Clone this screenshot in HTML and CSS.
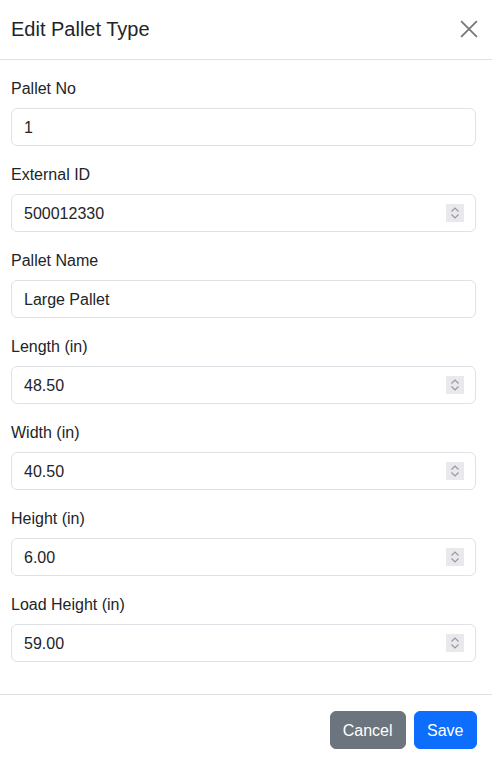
FILE: index.html
```html
<!DOCTYPE html>
<html lang="en">
<head>
    <meta charset="UTF-8">
    <meta name="viewport" content="width=device-width, initial-scale=1.0">
    <title>Edit Pallet Type</title>
    <link rel="stylesheet" href="styles.css">
</head>
<body>
    <div class="modal">
        <div class="modal-header">
            <h5 class="modal-title">Edit Pallet Type</h5>
            <button class="btn-close" aria-label="Close">
                <svg width="18" height="18" viewBox="0 0 16 16">
                    <path d="M1 1L15 15M15 1L1 15" stroke="#777" stroke-width="1.6" fill="none"/>
                </svg>
            </button>
        </div>
        <form class="modal-body">
            <div class="field">
                <label class="form-label">Pallet No</label>
                <div class="form-control">
                    <input type="text" value="1">
                </div>
            </div>
            <div class="field">
                <label class="form-label">External ID</label>
                <div class="form-control">
                    <input type="number" value="500012330">
                    <span class="spinner"></span>
                </div>
            </div>
            <div class="field">
                <label class="form-label">Pallet Name</label>
                <div class="form-control">
                    <input type="text" value="Large Pallet">
                </div>
            </div>
            <div class="field">
                <label class="form-label">Length (in)</label>
                <div class="form-control">
                    <input type="number" step="0.01" value="48.50">
                    <span class="spinner"></span>
                </div>
            </div>
            <div class="field">
                <label class="form-label">Width (in)</label>
                <div class="form-control">
                    <input type="number" step="0.01" value="40.50">
                    <span class="spinner"></span>
                </div>
            </div>
            <div class="field">
                <label class="form-label">Height (in)</label>
                <div class="form-control">
                    <input type="number" step="0.01" value="6.00">
                    <span class="spinner"></span>
                </div>
            </div>
            <div class="field">
                <label class="form-label">Load Height (in)</label>
                <div class="form-control">
                    <input type="number" step="0.01" value="59.00">
                    <span class="spinner"></span>
                </div>
            </div>
        </form>
        <div class="modal-footer">
            <button class="btn btn-secondary">Cancel</button>
            <button class="btn btn-primary">Save</button>
        </div>
    </div>
</body>
</html>
```

FILE: styles.css
```css
* {
    box-sizing: border-box;
}

body {
    font-family: 'Liberation Sans', Arial, sans-serif;
    font-size: 16px;
    line-height: 1.5;
    color: #212529;
    margin: 0;
    background-color: #fff;
}

.modal {
    width: 492px;
    background-color: #fff;
}

.modal-header {
    display: flex;
    align-items: center;
    justify-content: space-between;
    padding: 15px 14px 16px 11px;
    border-bottom: 1px solid #dee2e6;
}

.modal-title {
    margin: 0;
    font-size: 20px;
    font-weight: 500;
    line-height: 28px;
}

.btn-close {
    border: none;
    background: transparent;
    padding: 0;
    width: 18px;
    height: 18px;
    display: flex;
    cursor: pointer;
}

.modal-body {
    padding: 16px 16px 16px 11px;
    margin: 0;
}

.field {
    margin-bottom: 16px;
}

.form-label {
    display: block;
    margin-bottom: 8px;
    padding-top: 1px;
    height: 24px;
}

.form-control {
    display: flex;
    align-items: center;
    height: 38px;
    padding: 0 11px 0 12px;
    background-color: #fff;
    border: 1px solid #dee2e6;
    border-radius: 6px;
}

.form-control input {
    flex: 1;
    min-width: 0;
    border: none;
    padding: 2px 0 0;
    margin: 0;
    outline: none;
    font-family: inherit;
    font-size: 16px;
    line-height: 24px;
    color: #212529;
    background: transparent;
    -moz-appearance: textfield;
}

.form-control input::-webkit-inner-spin-button,
.form-control input::-webkit-outer-spin-button {
    -webkit-appearance: none;
    margin: 0;
}

/* стрелки числового поля, как у браузера */
.spinner {
    width: 18px;
    height: 18px;
    background-color: #e9e9ed;
    background-image:
        url("data:image/svg+xml,%3Csvg xmlns='http://www.w3.org/2000/svg' width='18' height='18' viewBox='0 0 18 18'%3E%3Cpath d='M5.5 7.5L9 4L12.5 7.5M5.5 10.5L9 14L12.5 10.5' stroke='%23999' stroke-width='1.2' fill='none'/%3E%3C/svg%3E");
    background-repeat: no-repeat;
}

.modal-footer {
    display: flex;
    justify-content: flex-end;
    gap: 8px;
    padding: 16px 15px 16px 16px;
    border-top: 1px solid #dee2e6;
}

.btn {
    height: 38px;
    padding: 7px 12px 5px;
    font-family: inherit;
    font-size: 16px;
    line-height: 1.5;
    border: 1px solid transparent;
    border-radius: 6px;
    color: #fff;
    cursor: pointer;
}

.btn-secondary {
    background-color: #6c757d;
    border-color: #6c757d;
}

.btn-primary {
    padding: 7px 12.5px 5px;
    background-color: #0d6efd;
    border-color: #0d6efd;
}
```
